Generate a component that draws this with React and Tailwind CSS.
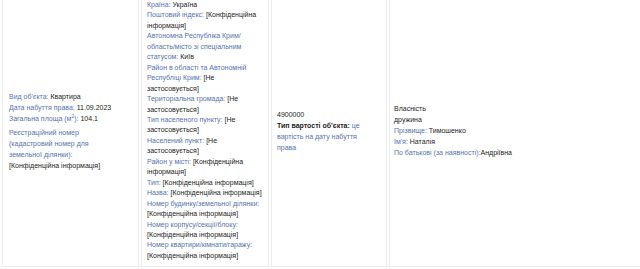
import React from 'react';

function L({ children }) {
  return <span className="text-[#5573ae]">{children}</span>;
}

function V({ children }) {
  return <span className="text-[#1c1c1c]">{children}</span>;
}

export default function App() {
  return (
    <div
      className="w-[640px] h-[269px] overflow-hidden bg-white text-[7px]"
      style={{ fontFamily: '"Liberation Sans", Arial, sans-serif' }}
    >
      <table className="table-fixed w-[700px] -mt-[8px] border-separate border-spacing-[2px]">
        <tbody>
          <tr>
            <td className="w-[137px] align-middle border border-[#ececec] pl-[6px] pr-[5px] py-[5px] leading-[11px]">
              <div>
                <L>Вид об'єкта: </L>
                <V>Квартира</V>
              </div>
              <div>
                <L>Дата набуття права: </L>
                <V>11.09.2023</V>
              </div>
              <div>
                <L>
                  Загальна площа (м<sup className="text-[5px]">2</sup>):{' '}
                </L>
                <V>104.1</V>
              </div>
              <div className="mt-[3px] pr-[30px]">
                <L>Реєстраційний номер (кадастровий номер для земельної ділянки):</L>
              </div>
              <div>
                <V>[Конфіденційна інформація]</V>
              </div>
            </td>
            <td className="w-[128px] align-middle border border-[#ececec] px-[5px] py-[5px] leading-[10.45px]">
              <div><L>Країна: </L><V>Україна</V></div>
              <div><L>Поштовий індекс: </L><V>[Конфіденційна інформація]</V></div>
              <div><L>Автономна Республіка Крим/область/місто зі спеціальним статусом: </L><V>Київ</V></div>
              <div><L>Район в області та Автономній Республіці Крим: </L><V>[Не застосовується]</V></div>
              <div><L>Територіальна громада: </L><V>[Не застосовується]</V></div>
              <div><L>Тип населеного пункту: </L><V>[Не застосовується]</V></div>
              <div><L>Населений пункт: </L><V>[Не застосовується]</V></div>
              <div><L>Район у місті: </L><V>[Конфіденційна інформація]</V></div>
              <div><L>Тип: </L><V>[Конфіденційна інформація]</V></div>
              <div><L>Назва: </L><V>[Конфіденційна інформація]</V></div>
              <div><L>Номер будинку/земельної ділянки: </L><V>[Конфіденційна інформація]</V></div>
              <div><L>Номер корпусу/секції/блоку: </L><V>[Конфіденційна інформація]</V></div>
              <div><L>Номер квартири/кімнати/гаражу: </L><V>[Конфіденційна інформація]</V></div>
            </td>
            <td className="w-[116px] align-middle border border-[#ececec] px-[5px] py-[5px] leading-[11px]">
              <div><V>4900000</V></div>
              <div className="pr-[8px]">
                <span className="font-bold text-[#1c1c1c]">Тип вартості об'єкта: </span>
                <L>це вартість на дату набуття права</L>
              </div>
            </td>
            <td className="align-middle border border-[#ececec] px-[4px] py-[5px] leading-[11px]">
              <div><V>Власність</V></div>
              <div><V>дружина</V></div>
              <div><L>Прізвище: </L><V>Тимошенко</V></div>
              <div><L>Ім'я: </L><V>Наталія</V></div>
              <div><L>По батькові (за наявності):</L><V>Андріївна</V></div>
            </td>
          </tr>
        </tbody>
      </table>
    </div>
  );
}
